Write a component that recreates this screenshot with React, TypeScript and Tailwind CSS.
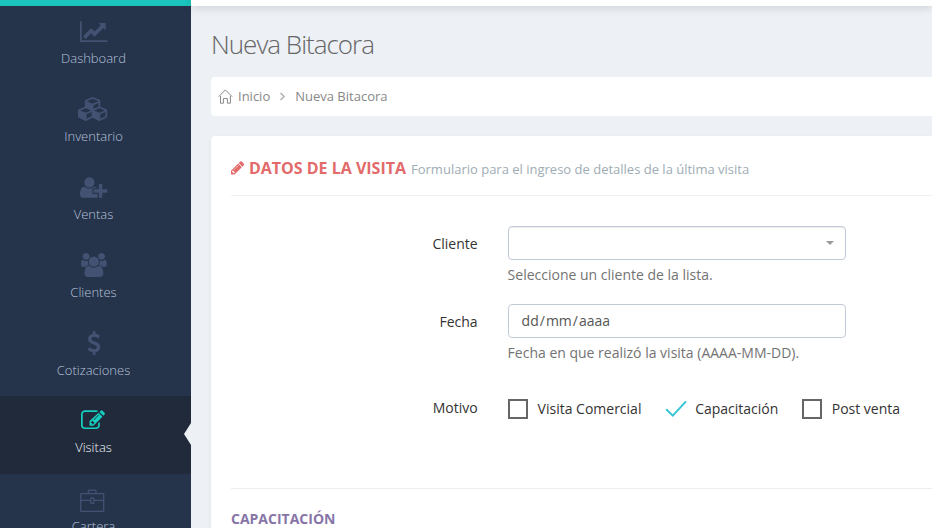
import type { ReactNode } from 'react';

type Glyph = { d: string; w: number; dy?: number };

const glyphs: Record<string, Glyph> = {
  chart: {
    w: 2048,
    dy: 45,
    d: 'M2048 1536v128H0V128h128v1408h1920zM1920 288v435q0 21-19.5 29.5T1865 745l-121-121-633 633q-10 10-23 10t-23-10L832 1024l-416 416-192-192 585-585q10-10 23-10t23 10l233 233 464-464-121-121q-16-16-7.5-35.5T1453 256h435q14 0 23 9t9 23z',
  },
  cubes: {
    w: 2304,
    d: 'M640 1632l384-192v-314l-384 164v342zm-64-454l404-173-404-173-404 173zm1088 454l384-192v-314l-384 164v342zm-64-454l404-173-404-173-404 173zm-448-293l384-165v-266l-384 164v267zm-64-379l441-189-441-189-441 189zm1088 518v416q0 36-19 67t-52 47l-448 224q-25 14-57 14t-57-14l-448-224q-4-2-7-4-2 2-7 4l-448 224q-25 14-57 14t-57-14l-448-224q-33-16-52-47t-19-67v-416q0-38 21.5-70t56.5-48l434-186v-400q0-38 21.5-70t56.5-48l448-192q23-10 50-10t50 10l448 192q35 16 56.5 48t21.5 70v400l434 186q36 16 57 48t21 70z',
  },
  userPlus: {
    w: 2048,
    dy: 40,
    d: 'M704 896q-159 0-271.5-112.5T320 512t112.5-271.5T704 128t271.5 112.5T1088 512 975.5 783.5 704 896zm960 128h352q13 0 22.5 9.5t9.5 22.5v192q0 13-9.5 22.5t-22.5 9.5h-352v352q0 13-9.5 22.5t-22.5 9.5h-192q-13 0-22.5-9.5t-9.5-22.5v-352h-352q-13 0-22.5-9.5t-9.5-22.5v-192q0-13 9.5-22.5t22.5-9.5h352v-352q0-13 9.5-22.5t22.5-9.5h192q13 0 22.5 9.5t9.5 22.5v352zm-736 224q0 52 38 90t90 38h256v238q-68 50-171 50H267q-121 0-194-69T0 1405q0-53 3.5-103.5t14-109T44 1084t43-97.5 62-81 85.5-53.5T346 832q19 0 39 17 79 61 154.5 91.5T704 971t164.5-30.5T1023 849q20-17 39-17 132 0 217 96h-223q-52 0-90 38t-38 90v192z',
  },
  users: {
    w: 1920,
    d: 'M593 896q-162 5-265 128H194q-82 0-138-40.5T0 865q0-353 124-353 6 0 43.5 21t97.5 42.5T384 597q67 0 133-23-5 37-5 66 0 139 81 256zm1071 637q0 120-73 189.5t-194 69.5H523q-121 0-194-69.5T256 1533q0-53 3.5-103.5t14-109T300 1212t43-97.5 62-81 85.5-53.5T602 960q10 0 43 21.5t73 48 107 48 135 21.5 135-21.5 107-48 73-48 43-21.5q61 0 111.5 20t85.5 53.5 62 81 43 97.5 26.5 108.5 14 109 3.5 103.5zM640 256q0 106-75 181t-181 75-181-75-75-181 75-181T384 0t181 75 75 181zm704 384q0 159-112.5 271.5T960 1024 688.5 911.5 576 640t112.5-271.5T960 256t271.5 112.5T1344 640zm576 225q0 78-56 118.5t-138 40.5h-134q-103-123-265-128 81-117 81-256 0-29-5-66 66 23 133 23 59 0 119-21.5t97.5-42.5 43.5-21q124 0 124 353zm-128-609q0 106-75 181t-181 75-181-75-75-181 75-181 181-75 181 75 75 181z',
  },
  dollar: {
    w: 1792,
    d: 'M1362 1185q0 153-99.5 263.5T1004 1585v175q0 14-9 23t-23 9H837q-13 0-22.5-9.5T805 1760v-175q-66-9-127.5-31T576 1509.5t-74-48-46.5-37.5-17.5-18q-17-21-2-41l103-135q7-10 23-12 15-2 24 9l2 2q113 99 243 125 37 8 74 8 81 0 142.5-43t61.5-122q0-28-15-53t-33.5-42-58.5-37.5-66-32-80-32.5q-39-16-61.5-25T732 948.5t-62.5-31T613 882t-53.5-42.5-43.5-49-35.5-58-21-66.5-8.5-78q0-138 98-242t255-134V32q0-13 9.5-22.5T836 0h135q14 0 23 9t9 23v176q57 6 110.5 23t87 33.5T1264 302t39 29 15 14q17 18 5 38l-81 146q-8 15-23 16-14 3-27-7-3-3-14.5-12t-39-26.5-58.5-32-74.5-26T911 430q-95 0-155 43t-60 111q0 26 8.5 48t29.5 41.5 39.5 33 56 31 60.5 27 70 27.5q53 20 81 31.5t76 35 75.5 42.5 62 50 53 63.5 31.5 76.5 13 94z',
  },
  edit: {
    w: 1792,
    dy: -35,
    d: 'M888 1184l116-116-152-152-116 116v56h96v96h56zm440-720q-16-16-33 1L945 815q-17 17-1 33t33-1l350-350q17-17 1-33zm80 594v190q0 119-84.5 203.5T1120 1536H288q-119 0-203.5-84.5T0 1248V416q0-119 84.5-203.5T288 128h832q63 0 117 25 15 7 18 23 3 17-9 29l-49 49q-14 14-32 8-23-6-45-6H288q-66 0-113 47t-47 113v832q0 66 47 113t113 47h832q66 0 113-47t47-113v-126q0-13 9-22l64-64q15-15 35-7t20 29zm-96-738l288 288-672 672H640V928zm444 132l-92 92-288-288 92-92q28-28 68-28t68 28l152 152q28 28 28 68t-28 68z',
  },
  pencil: {
    w: 1536,
    d: 'M363 1536l91-91-235-235-91 91v107h128v128h107zm523-928q0-22-22-22-10 0-17 7l-542 542q-7 7-7 17 0 22 22 22 10 0 17-7l542-542q7-7 7-17zm-54-192l416 416-832 832H0v-416zm683 96q0 53-37 90l-166 166-416-416 166-165q36-38 90-38 53 0 91 38l235 234q37 39 37 91z',
  },
};

function FontGlyph({ name, size }: { name: string; size: number }) {
  const g = glyphs[name];
  return (
    <svg
      width={(g.w / 1792) * size}
      height={size}
      viewBox={`0 ${-(g.dy ?? 0)} ${g.w} 1792`}
      fill="currentColor"
      className="block shrink-0 overflow-visible"
    >
      <path d={g.d} />
    </svg>
  );
}

function Briefcase() {
  return (
    <svg width="27" height="24" viewBox="0 -2 27 24" fill="none" stroke="currentColor" strokeWidth="1.3" className="block overflow-visible">
      <rect x="0.7" y="4.7" width="23" height="17.6" rx="0.6" />
      <path d="M8.4 4.5V2.5q0-1.3 1.3-1.3h5.1q1.3 0 1.3 1.3v2M.8 11.3h9.8M14 11.3h9.6" />
      <rect x="10.7" y="9" width="3.2" height="5.4" rx="1" />
    </svg>
  );
}

function Home() {
  return (
    <svg width="15" height="15" viewBox="0 0 15 15" fill="none" stroke="currentColor" strokeWidth="1" strokeLinejoin="round" className="block">
      <path d="M.8 7.6L7.4.9l6.7 6.7M2.5 7v7.2h2.9V9.5h4v4.7h3V7" />
    </svg>
  );
}

function NavItem({ label, icon, active = false }: { label: string; icon: ReactNode; active?: boolean }) {
  return (
    <a
      className={`relative flex h-[78px] shrink-0 flex-col items-center pt-[13px] pr-[4px] ${
        active ? 'bg-[#202a3b] text-[#16cfc1]' : 'text-[#435272]'
      }`}
    >
      {icon}
      <span className={`text-[13px] leading-[18px] font-light ${active ? 'mt-[5px] text-[#f1f5fb]' : 'mt-[6px] text-[#b4c1da]'}`}>{label}</span>
      {active && (
        <svg width="7" height="22" viewBox="0 0 7 22" className="absolute top-[27px] right-0">
          <path d="M7 0L0 11l7 11z" fill="#edf0f5" />
        </svg>
      )}
    </a>
  );
}

function Row({ label, children, className }: { label: string; children: ReactNode; className: string }) {
  return (
    <div className={`flex gap-[30px] ${className}`}>
      <label className="w-[246.6px] shrink-0 pt-[8px] text-right text-[14px] leading-[20px] text-[#333]">{label}</label>
      {children}
    </div>
  );
}

function Check({ label, checked = false, className }: { label: string; checked?: boolean; className: string }) {
  return (
    <label className={`flex items-center ${className}`}>
      {checked ? (
        <svg width="22" height="20" viewBox="0 0 22 20" fill="none" stroke="#36c6d3" strokeWidth="2" className="block">
          <path d="M1.2 10.2l6.6 6.4L21 2.4" />
        </svg>
      ) : (
        <span className="block size-[20px] border-2 border-[#666]" />
      )}
      <span className={`text-[14px] leading-[20px] text-[#333] ${checked ? 'ml-[8px]' : 'ml-[10px]'}`}>{label}</span>
    </label>
  );
}

export default function App() {
  return (
    <div className="flex h-[528px] w-[932px] overflow-hidden bg-[#edf0f5] font-['Open_Sans','Noto_Sans',sans-serif]">
      <nav className="flex w-[191px] shrink-0 flex-col overflow-hidden border-t-6 border-[#1bc4bc] bg-[#26344b]">
        <NavItem label="Dashboard" icon={<FontGlyph name="chart" size={24} />} />
        <NavItem label="Inventario" icon={<FontGlyph name="cubes" size={24} />} />
        <NavItem label="Ventas" icon={<FontGlyph name="userPlus" size={24} />} />
        <NavItem label="Clientes" icon={<FontGlyph name="users" size={24} />} />
        <NavItem label="Cotizaciones" icon={<FontGlyph name="dollar" size={24} />} />
        <NavItem label="Visitas" active icon={<div className="pr-[1px]"><FontGlyph name="edit" size={24} /></div>} />
        <NavItem label="Cartera" icon={<Briefcase />} />
      </nav>

      <div className="flex min-w-0 flex-1 flex-col">
        <div className="h-[6px] shrink-0 bg-white shadow-[0_1px_8px_0_rgba(50,50,50,0.22)]" />
        <div className="flex min-h-0 flex-1 flex-col pl-[20px]">
          <h1 className="mt-[21px] text-[26px] leading-[35px] font-light tracking-[-1px] text-[#666]">Nueva Bitacora</h1>

          <div className="mt-[15px] flex h-[39px] shrink-0 items-center rounded-l-[4px] bg-white pl-[7px] text-[13px] text-[#888]">
            <Home />
            <span className="ml-[5px]">Inicio</span>
            <svg width="7" height="9" viewBox="0 0 7 9" fill="none" stroke="#aaa" strokeWidth="1.3" className="ml-[9px]">
              <path d="M1.5 1l3.6 3.5L1.5 8" />
            </svg>
            <span className="ml-[9px]">Nueva Bitacora</span>
          </div>

          <section className="mt-[20px] flex-1 rounded-tl-[4px] bg-white pl-[20px] shadow-[0_2px_3px_2px_rgba(0,0,0,0.03)]">
            <header className="flex h-[60px] items-center border-b border-[#eef1f5] pt-[5px] text-[#e26a6a]">
              <FontGlyph name="pencil" size={15.5} />
              <h2 className="ml-[4.6px] text-[16px] leading-[22px] font-bold">DATOS DE LA VISITA</h2>
              <span className="ml-[5px] pt-[2px] text-[13px] leading-[18px] text-[#9eacb4]">Formulario para el ingreso de detalles de la última visita</span>
            </header>

            <Row label="Cliente" className="mt-[30px]">
              <div>
                <div className="flex h-[34px] w-[338px] items-center justify-end rounded-[4px] border border-[#c2cad8] pr-[11px] shadow-[inset_0_1px_1px_rgba(0,0,0,0.075)]">
                  <span className="border-x-4 border-t-4 border-x-transparent border-t-[#999]" />
                </div>
                <p className="mt-[5px] text-[14px] leading-[20px] text-[#737373]">Seleccione un cliente de la lista.</p>
              </div>
            </Row>
            <Row label="Fecha" className="mt-[19px]">
              <div>
                <div className="flex h-[34px] w-[338px] items-center gap-[1px] rounded-[4px] border border-[#c2cad8] pb-[2px] pl-[13px] text-[14px] text-[#555]">
                  <span>dd</span>
                  <span>/</span>
                  <span>mm</span>
                  <span>/</span>
                  <span>aaaa</span>
                </div>
                <p className="mt-[5px] text-[14px] leading-[20px] text-[#737373]">Fecha en que realizó la visita (AAAA-MM-DD).</p>
              </div>
            </Row>
            <Row label="Motivo" className="mt-[27px]">
              <div className="flex pt-[9px]">
                <Check label="Visita Comercial" className="" />
                <Check label="Capacitación" checked className="ml-[23.7px]" />
                <Check label="Post venta" className="ml-[23.4px]" />
              </div>
            </Row>

            <div className="mt-[69px] border-t border-[#eee] pt-[20px]">
              <h3 className="text-[14px] leading-[20px] font-bold text-[#8775a7]">CAPACITACIÓN</h3>
            </div>
          </section>
        </div>
      </div>
    </div>
  );
}
